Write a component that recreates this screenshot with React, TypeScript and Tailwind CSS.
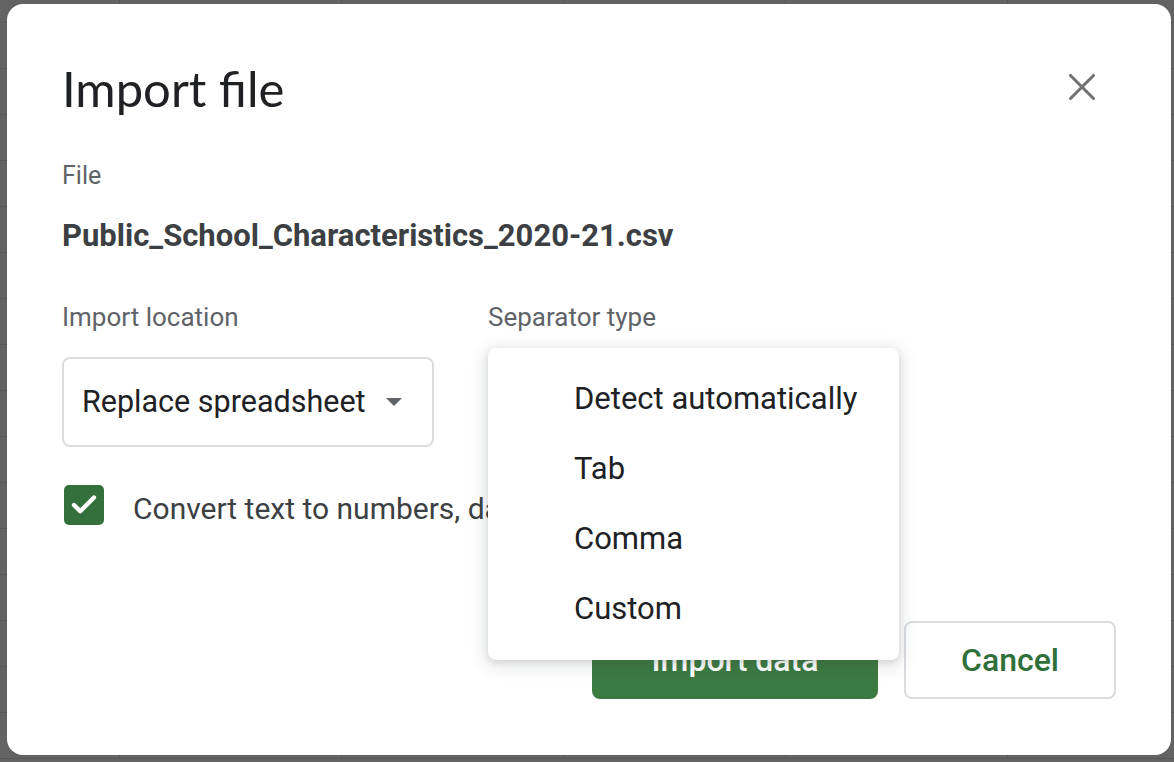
import { Check, X } from 'lucide-react';

const rows = Array.from({ length: 17 });
const cols = Array.from({ length: 6 });

const separatorOptions = ['Detect automatically', 'Tab', 'Comma', 'Custom'];

// Spreadsheet grid that sits dimmed behind the modal
const SheetBackdrop = () => (
  <div className="-mt-[23px] -ml-[102px] flex flex-col">
    {rows.map((_, r) => (
      <div key={r} className="flex h-[46px]">
        {cols.map((_, c) => (
          <div key={c} className="h-[46px] w-[222px] shrink-0 border-r border-b border-[#575757]" />
        ))}
      </div>
    ))}
  </div>
);

const SeparatorMenu = () => (
  <div className="absolute top-[344px] left-[481px] w-[411px] rounded-lg bg-white py-4 shadow-[0_2px_6px_rgba(60,64,67,0.15),0_4px_16px_4px_rgba(60,64,67,0.12)]">
    {separatorOptions.map(option => (
      <div key={option} className="flex h-[70px] items-center pl-[86px] text-[31px] text-[#202124]">
        {option}
      </div>
    ))}
  </div>
);

export default function App() {
  return (
    <div
      className="relative h-[762px] w-[1174px] overflow-hidden bg-[#636363]"
      style={{ fontFamily: 'Roboto, "Liberation Sans", sans-serif' }}
    >
      <SheetBackdrop />

      {/* Import dialog */}
      <div className="absolute top-[4px] left-[7px] flex h-[751px] w-[1164px] flex-col rounded-[16px] bg-white px-[55px] pt-[54px]">
        <div className="flex items-start justify-between">
          <h1 className="text-[49px] leading-[60px] text-[#202124]" style={{ fontFamily: 'Lato, sans-serif' }}>
            Import file
          </h1>
          <button className="mt-[5px] mr-[10px] flex h-[48px] w-[48px] items-center justify-center text-[#6f7175]" aria-label="Close">
            <X size={46} strokeWidth={1.6} />
          </button>
        </div>

        <div className="mt-[42px] text-[25px] leading-[32px] text-[#5f6368]">File</div>
        <div className="mt-[28px] text-[31px] leading-[32px] font-bold text-[#3c4043]">
          Public_School_Characteristics_2020-21.csv
        </div>

        <div className="mt-[49px] flex">
          <div className="flex w-[426px] flex-col">
            <div className="text-[26px] leading-[32px] text-[#5f6368]">Import location</div>
            <div className="mt-[24px] flex h-[90px] w-[372px] items-center rounded-lg border-2 border-[#dadce0] pr-[30px] pl-[18px]">
              <span className="flex-1 text-[30.5px] text-[#202124]">Replace spreadsheet</span>
              <svg width="16" height="8" viewBox="0 0 16 8" className="fill-[#5f6368]">
                <path d="M0 0h16L8 8z" />
              </svg>
            </div>
          </div>
          <div className="text-[26px] leading-[32px] text-[#5f6368]">Separator type</div>
        </div>

        <label className="mt-[32px] flex items-center gap-[29px] pl-[2px]">
          <span className="flex h-[40px] w-[40px] items-center justify-center rounded-[5px] bg-[#34703b] text-white">
            <Check size={30} strokeWidth={3.5} />
          </span>
          <span className="pt-[7px] text-[30px] text-[#3c4043]">Convert text to numbers, dates, and formulas</span>
        </label>

        <div className="mt-auto mb-[56px] flex justify-end gap-[26px]">
          <button className="h-[78px] w-[286px] rounded-lg bg-[#3b7a41] text-[32px] font-medium text-white">
            Import data
          </button>
          <button className="h-[78px] w-[212px] rounded-lg border-2 border-[#dadce0] bg-white text-[32px] font-medium text-[#2f6f39]">
            Cancel
          </button>
        </div>

        <SeparatorMenu />
      </div>
    </div>
  );
}
